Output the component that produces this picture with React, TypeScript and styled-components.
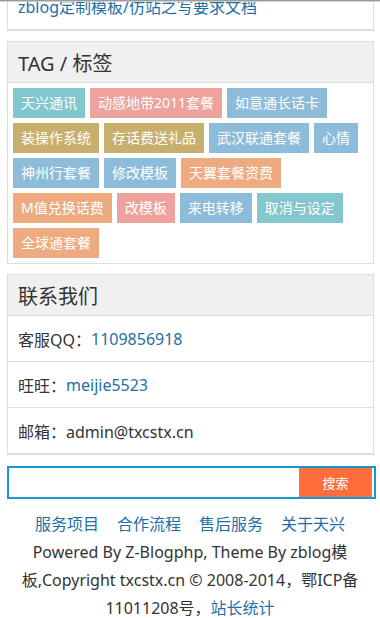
import React from "react";
import styled, { createGlobalStyle } from "styled-components";

const GlobalStyle = createGlobalStyle`
  body {
    margin: 0;
    background: #fff;
    color: #333;
    font-family: "Noto Sans", "Noto Sans CJK SC", sans-serif;
    overflow: hidden;
  }
  a {
    color: #1e6fa6;
    text-decoration: none;
  }
`;

const TopEdge = styled.div`
  position: fixed;
  top: 0;
  left: 0;
  right: 0;
  height: 1px;
  background: #9c9c9c;
  box-shadow: 0 1px 0 #cfcfcf;
  z-index: 2;
`;

const Page = styled.div`
  display: flex;
  flex-direction: column;
`;

const Card = styled.section<{ $thick?: boolean }>`
  margin: 0 6px 10px 7px;
  border: 1px solid #ddd;
  border-bottom-width: ${(p) => (p.$thick ? "2px" : "1px")};
  background: #fff;
`;

const ClippedCard = styled(Card)`
  margin-top: -6px;
  padding: 0 10px 10px;
  font-size: 16px;
  line-height: 24px;
`;

const CardHead = styled.h3`
  margin: 0;
  height: 40px;
  padding: 0 10px;
  display: flex;
  align-items: center;
  background: #f0f0f0;
  border-bottom: 1px solid #ddd;
  font-size: 20px;
  font-weight: normal;
  color: #333;
`;

const TagList = styled.div`
  display: flex;
  flex-wrap: wrap;
  gap: 5px;
  padding: 5px;
`;

const Tag = styled.a<{ $bg: string }>`
  height: 30px;
  line-height: 30px;
  padding: 0 8px;
  font-size: 14px;
  color: #fff;
  background: ${(p) => p.$bg};
  white-space: nowrap;
`;

const ContactRow = styled.div`
  height: 45px;
  padding: 0 10px;
  display: flex;
  align-items: center;
  font-size: 16px;
  border-bottom: 1px solid #ddd;
  &:last-child {
    border-bottom: none;
  }
`;

const SearchForm = styled.form`
  margin: 1px 4px 0 7px;
  height: 29px;
  display: flex;
  border: 2px solid #1599d3;
`;

const SearchInput = styled.input`
  flex: 1;
  border: none;
  outline: none;
  padding: 0 8px;
  font-size: 14px;
  background: #fff;
`;

const SearchButton = styled.button`
  width: 73px;
  border: none;
  margin: 0 2px 0 0;
  background: #ff6d3a;
  color: #fff;
  font-size: 13px;
  font-family: inherit;
  padding: 0;
`;

const Footer = styled.footer`
  margin-top: 11px;
  padding: 0 8px;
  text-align: center;
  font-size: 16px;
  line-height: 28px;
  color: #333;
`;

const FooterNav = styled.nav`
  display: flex;
  justify-content: center;
  gap: 18px;
`;

const teal = "#82c7cd";
const pink = "#eda29e";
const blue = "#8dbcda";
const tan = "#c9af6d";
const orange = "#eeaa80";

const tags: [string, string][] = [
  ["天兴通讯", teal],
  ["动感地带2011套餐", pink],
  ["如意通长话卡", blue],
  ["装操作系统", tan],
  ["存话费送礼品", tan],
  ["武汉联通套餐", blue],
  ["心情", blue],
  ["神州行套餐", blue],
  ["修改模板", blue],
  ["天翼套餐资费", orange],
  ["M值兑换话费", orange],
  ["改模板", pink],
  ["来电转移", blue],
  ["取消与设定", teal],
  ["全球通套餐", orange],
];

const App: React.FC = () => {
  return (
    <Page>
      <GlobalStyle />
      <TopEdge />
      <ClippedCard $thick>
        <a href="#">zblog定制模板/仿站之写要求文档</a>
      </ClippedCard>

      <Card>
        <CardHead>TAG / 标签</CardHead>
        <TagList>
          {tags.map(([name, bg]) => (
            <Tag key={name} href="#" $bg={bg}>
              {name}
            </Tag>
          ))}
        </TagList>
      </Card>

      <Card $thick>
        <CardHead>联系我们</CardHead>
        <ContactRow>
          客服QQ：<a href="#">1109856918</a>
        </ContactRow>
        <ContactRow>
          旺旺：<a href="#">meijie5523</a>
        </ContactRow>
        <ContactRow>邮箱：admin@txcstx.cn</ContactRow>
      </Card>

      <SearchForm onSubmit={(e) => e.preventDefault()}>
        <SearchInput type="text" />
        <SearchButton type="submit">搜索</SearchButton>
      </SearchForm>

      <Footer>
        <FooterNav>
          <a href="#">服务项目</a>
          <a href="#">合作流程</a>
          <a href="#">售后服务</a>
          <a href="#">关于天兴</a>
        </FooterNav>
        Powered By Z-Blogphp, Theme By zblog模板,Copyright txcstx.cn © 2008-2014，鄂ICP备11011208号，
        <a href="#">站长统计</a>
      </Footer>
    </Page>
  );
};

export default App;
